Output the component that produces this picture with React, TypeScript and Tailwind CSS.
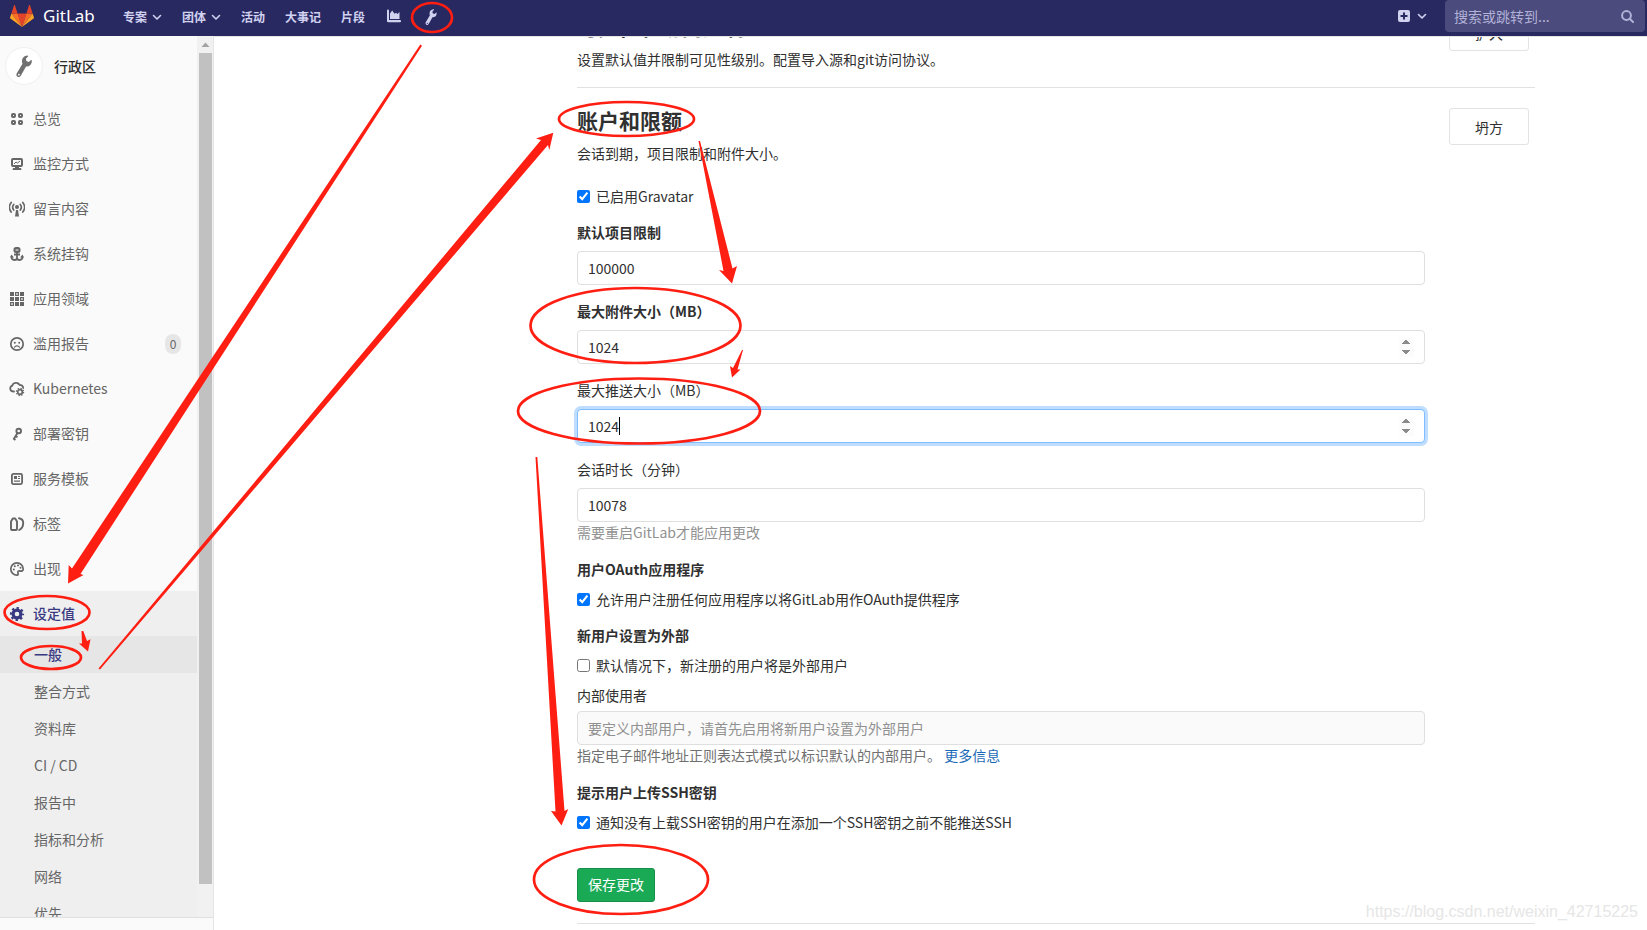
import React from "react";

type IconProps = { className?: string };

const Wrench = ({ className }: IconProps) => (
  <svg viewBox="0 0 16 22" className={className} fill="currentColor" fillRule="evenodd" aria-hidden="true">
    <path d="M11.500.500C8 .800 5.800 3.200 6 6.500c0 .9.2 1.500.5 2.200L.8 18.200c-.8 1.500-.4 2.900.8 3.600 1.200.6 2.500.2 3.200-1.100L10 11.500c3.500.2 6-2.300 5.800-6 0-.6-.3-.8-.8-.4L12.800 7l-2.500-1.100L10 3.400l2-1.900c.5-.5.2-1-.5-1zM2.900 18.800a.9.9 0 1 1 0 1.800.9.9 0 0 1 0-1.800z" />
  </svg>
);

const Chevron = () => (
  <svg viewBox="0 0 10 10" className="h-2.5 w-2.5" fill="none" stroke="currentColor" strokeWidth="1.600" strokeLinecap="round" strokeLinejoin="round" aria-hidden="true">
    <path d="M1.500 3.500 5 7l3.500-3.500" />
  </svg>
);

const Tanuki = () => (
  <svg viewBox="0 0 24 22" className="h-[22px] w-6" aria-hidden="true">
    <path d="M12 22 16.420 8.400H7.580z" fill="#e24329" />
    <path d="M12 22 7.580 8.400H1.390z" fill="#fc6d26" />
    <path d="M1.390 8.400.05 12.530a.91.91 0 0 0 .330 1.020L12 22z" fill="#fca326" />
    <path d="M1.390 8.400h6.190L4.920.220a.46.46 0 0 0-.87 0z" fill="#e24329" />
    <path d="M12 22 16.420 8.400h6.190z" fill="#fc6d26" />
    <path d="m22.610 8.400 1.340 4.130a.91.91 0 0 1-.330 1.020L12 22z" fill="#fca326" />
    <path d="M22.610 8.400h-6.190L19.080.220a.46.46 0 0 1 .87 0z" fill="#e24329" />
  </svg>
);

const glyphs: Record<string, React.ReactNode> = {
  overview: (
    <g fill="none" stroke="currentColor" strokeWidth="2">
      <rect x="3" y="3" width="3" height="3" rx="1" />
      <rect x="10" y="3" width="3" height="3" rx="1" />
      <rect x="3" y="10" width="3" height="3" rx="1" />
      <rect x="10" y="10" width="3" height="3" rx="1" />
    </g>
  ),
  monitor: (
    <>
      <rect x="3" y="3" width="10" height="7" rx="1" fill="none" stroke="currentColor" strokeWidth="2" />
      <path d="m5 8 2-2 1.500 1L11 5" fill="none" stroke="currentColor" />
      <path d="M6 11h4v1h1.500a.8.8 0 0 1 .8.8v1.200H3.700v-1.200a.8.8 0 0 1 .8-.8H6z" />
    </>
  ),
  messages: (
    <>
      <circle cx="8" cy="6" r="2" />
      <path d="M7 9h2l1 6.500H6z" />
      <g fill="none" stroke="currentColor" strokeWidth="1.700" strokeLinecap="round">
        <path d="M4.700 3.500a4.500 4.500 0 0 0 0 5.500M11.300 3.500a4.500 4.500 0 0 1 0 5.500M2.200 1.500a7.500 7.500 0 0 0 0 9.500M13.800 1.500a7.500 7.500 0 0 1 0 9.500" />
      </g>
    </>
  ),
  hook: (
    <>
      <rect x="5.500" y="2" width="5" height="4" rx="1.500" fill="none" stroke="currentColor" strokeWidth="2" />
      <path d="M5 4h6" stroke="currentColor" />
      <path d="M8 6v7M2.500 10.500c0 2 1.200 3.500 2.800 3.500C7 14 8 13 8 12c0 1 1 2 2.700 2 1.600 0 2.800-1.500 2.800-3.500M5 8.500h6" fill="none" stroke="currentColor" strokeWidth="1.800" />
      <path d="m1 11.500 1.500-3L5 11.500zm10 0 2.500-3 1.500 3z" />
    </>
  ),
  apps: (
    <>
      <path d="M1 1h4v4H1zM11 1h4v4h-4zM1 6h4v4H1zM6 6h4v4H6zM6 11h4v4H6zM11 11h4v4h-4z" />
      <path d="M6.600 1.600h2.800v2.800H6.600zM11.600 6.600h2.800v2.800h-2.800zM1.600 11.600h2.800v2.800H1.600z" fill="none" stroke="currentColor" strokeWidth="1.200" />
    </>
  ),
  abuse: (
    <>
      <circle cx="8" cy="8" r="6.200" fill="none" stroke="currentColor" strokeWidth="1.700" />
      <circle cx="5.800" cy="6.800" r="1" />
      <circle cx="10.200" cy="6.800" r="1" />
      <path d="M5.500 11.200c1-1.700 4-1.700 5 0" fill="none" stroke="currentColor" strokeWidth="1.200" strokeLinecap="round" />
    </>
  ),
  kubernetes: (
    <>
      <path d="M5 10.500H4a3 3 0 0 1-.8-5.800C3.800 2.500 6 1.500 8 2c1.200.2 2 1 2.500 1.800 2.200 0 3.500 1 3.700 3.200" fill="none" stroke="currentColor" strokeWidth="1.800" strokeLinecap="round" />
      <circle cx="11" cy="11" r="2.300" fill="none" stroke="currentColor" strokeWidth="1.700" />
      <circle cx="11" cy="11" r="3.600" fill="none" stroke="currentColor" strokeWidth="1.200" strokeDasharray="1.400 1.427" />
    </>
  ),
  key: (
    <>
      <circle cx="9.700" cy="5" r="2.300" fill="none" stroke="currentColor" strokeWidth="1.900" />
      <path d="m8.500 7-4 6.500M6.500 10l2 1.300M4.500 12.800l2 1.200" fill="none" stroke="currentColor" strokeWidth="1.900" />
    </>
  ),
  template: (
    <>
      <rect x="2.900" y="2.900" width="10.200" height="10.200" rx="1.500" fill="none" stroke="currentColor" strokeWidth="1.800" />
      <path d="M5 5h3v3H5zM9 5h2v1H9zM9 7h2v1H9zM5 9.500h6v1.300H5z" />
    </>
  ),
  labels: (
    <g fill="none" stroke="currentColor" strokeWidth="1.900" strokeLinejoin="round">
      <path d="M2 5.500 3.800 2.500h2.400L8 5.500V13a1 1 0 0 1-1 1H3a1 1 0 0 1-1-1z" />
      <path d="M10 2.300c2.500.4 4.200 2.200 4.200 4.700 0 2.800-1.200 5.500-4 7" strokeLinecap="round" />
    </g>
  ),
  palette: (
    <>
      <path d="M8 1.800A6.200 6.200 0 1 0 8 14.200c1.500 0 1.200-1.500.9-2.600-.3-1.300.7-2 1.900-1.700 1.700.5 3.400.1 3.400-2A6.200 6.200 0 0 0 8 1.800z" fill="none" stroke="currentColor" strokeWidth="1.700" />
      <circle cx="4.800" cy="8.500" r="1" />
      <circle cx="5.800" cy="5.300" r="1" />
      <circle cx="9" cy="4.500" r="1" />
      <circle cx="11.500" cy="6.800" r="1" />
    </>
  ),
  settings: (
    <>
      <circle cx="8" cy="8" r="3.900" fill="none" stroke="currentColor" strokeWidth="3.200" />
      <circle cx="8" cy="8" r="6.100" fill="none" stroke="currentColor" strokeWidth="2" strokeDasharray="2.400 2.391" strokeDashoffset="1.200" />
    </>
  ),
};

const Glyph = ({ name }: { name: string }) => (
  <svg viewBox="0 0 16 16" className="h-4 w-4 shrink-0" fill="currentColor" aria-hidden="true">
    {glyphs[name]}
  </svg>
);

const menu = [
  { icon: "overview", label: "总览" },
  { icon: "monitor", label: "监控方式" },
  { icon: "messages", label: "留言内容" },
  { icon: "hook", label: "系统挂钩" },
  { icon: "apps", label: "应用领域" },
  { icon: "abuse", label: "滥用报告", count: 0 },
  { icon: "kubernetes", label: "Kubernetes" },
  { icon: "key", label: "部署密钥" },
  { icon: "template", label: "服务模板" },
  { icon: "labels", label: "标签" },
  { icon: "palette", label: "出现" },
];

const submenu = ["整合方式", "资料库", "CI / CD", "报告中", "指标和分析", "网络", "优先"];

function Navbar() {
  return (
    <header className="flex h-9 shrink-0 items-start bg-[#292961] pl-2.5 text-[#d1d1f0]">
      <a href="#" className="flex h-8 items-center gap-[9px]">
        <Tanuki />
        <span className="w-[52px] font-['Noto_Sans','Noto_Sans_CJK_SC',sans-serif] text-[17px] leading-8 text-white">GitLab</span>
      </a>
      <nav className="ml-7 flex h-[33px] items-center gap-5 text-xs font-bold">
        <button type="button" className="flex items-center gap-[5px]">专案<Chevron /></button>
        <button type="button" className="flex items-center gap-[5px]">团体<Chevron /></button>
        <a href="#">活动</a>
        <a href="#">大事记</a>
        <a href="#">片段</a>
        <a href="#" aria-label="统计" className="ml-0.5 pb-0.5">
          <svg viewBox="0 0 14 14" className="h-3.5 w-3.5" fill="currentColor" aria-hidden="true">
            <path d="M0 1.500a1 1 0 0 1 2 0V11h11a1 1 0 0 1 0 2.300H1.200A1.200 1.200 0 0 1 0 12zM3 4.500l2.200-3 2.300 3.200 1.500-1 1.500 1.300L12.500 3v7H3z" />
          </svg>
        </a>
        <a href="#" aria-label="管理" className="ml-1"><Wrench className="h-4 w-3" /></a>
      </nav>
      <div className="ml-auto flex items-center">
        <button type="button" aria-label="新建" className="flex items-center gap-[7px] pr-[18px]">
          <svg viewBox="0 0 12 12" className="h-3 w-3" aria-hidden="true">
            <rect width="12" height="12" rx="2" fill="currentColor" />
            <path d="M6 2.500v7M2.500 6h7" stroke="#292961" strokeWidth="2" />
          </svg>
          <Chevron />
        </button>
        <div className="mr-0.5 flex h-8 w-[200px] items-center rounded bg-[#4b4b7d] pr-[11px] pl-[9px]">
          <input aria-label="搜索" placeholder="搜索或跳转到..." className="min-w-0 flex-1 bg-transparent text-sm text-white outline-none placeholder:text-[#b2b2d8]" />
          <svg viewBox="0 0 13 13" className="h-[13px] w-[13px] text-[#b2b2d8]" fill="none" stroke="currentColor" strokeWidth="2" strokeLinecap="round" aria-hidden="true">
            <circle cx="5.500" cy="5.500" r="4.400" />
            <path d="m9 9 3 3" />
          </svg>
        </div>
      </div>
    </header>
  );
}

function Sidebar() {
  return (
    <aside className="flex w-[214px] shrink-0 flex-col border-r border-[#e5e5e5] bg-[#fafafa]">
      <div className="flex min-h-0 flex-1">
        <div className="flex min-w-0 flex-1 flex-col overflow-hidden">
          <div className="flex h-[60px] shrink-0 items-center gap-[11px] pl-[5px] text-sm font-medium text-[#2e2e2e]">
            <span className="flex h-[38px] w-[38px] items-center justify-center rounded-full border border-[#f0f0f0] bg-white text-[#707070]">
              <Wrench className="h-[22px] w-4" />
            </span>
            行政区
          </div>
          <nav className="flex flex-1 flex-col text-sm text-[#666]">
            {menu.map((m) => (
              <a key={m.label} href="#" className="flex h-[45px] shrink-0 items-center gap-2 pr-4 pl-[9px]">
                <Glyph name={m.icon} />
                <span className="pb-0.5">{m.label}</span>
                {m.count !== undefined && (
                  <span className="ml-auto h-5 w-4 rounded-full bg-[#e6e6e6] text-center text-xs leading-5">{m.count}</span>
                )}
              </a>
            ))}
            <div className="flex flex-1 flex-col bg-[#efefef]">
              <a href="#" className="flex h-[45px] shrink-0 items-center gap-2 pl-[9px] font-medium text-[#393982]">
                <Glyph name="settings" />
                <span className="pb-0.5">设定值</span>
              </a>
              <a href="#" className="flex h-[37px] shrink-0 items-center bg-[#e6e6e6] pb-0.5 pl-[34px] font-medium text-[#393982]">一般</a>
              {submenu.map((s) => (
                <a key={s} href="#" className="flex h-[37px] shrink-0 items-center pb-0.5 pl-[34px]">{s}</a>
              ))}
            </div>
          </nav>
        </div>
        <div className="flex w-4 flex-col items-center bg-[#f1f1f1]">
          <svg viewBox="0 0 16 17" className="h-[17px] w-4 shrink-0" aria-hidden="true">
            <path d="M8.500 6.500 12.500 11h-8z" fill="#a3a3a3" />
          </svg>
          <div className="mb-[33px] w-[13px] flex-1 bg-[#c1c1c1]" />
        </div>
      </div>
      <div className="h-[13px] shrink-0 border-t border-[#e0e0e0]" />
    </aside>
  );
}

const fieldClass =
  "block h-[34px] w-full rounded border border-[#dfdfdf] bg-white px-2.5 text-sm text-[#303030] outline-none [&::-webkit-inner-spin-button]:opacity-100";

function SectionHead({ title, text, action }: { title: string; text: string; action: string }) {
  return (
    <div className="flex items-start justify-between pr-1.5">
      <div>
        <h4 className="text-[21px] leading-[25px] font-bold">{title}</h4>
        <p className="mt-2.5">{text}</p>
      </div>
      <button type="button" className="h-[37px] w-20 rounded-[3px] border border-[#e3e3e3] bg-white">{action}</button>
    </div>
  );
}

function Check({ label, on, className }: { label: string; on?: boolean; className: string }) {
  return (
    <label className={`flex items-center gap-1.5 ${className}`}>
      <input type="checkbox" defaultChecked={on} className="h-[13px] w-[13px]" />
      {label}
    </label>
  );
}

function Main() {
  return (
    <main className="min-w-0 flex-1 overflow-hidden border-t border-[#e5e5e5] pr-28 pl-[363px] text-sm leading-5 text-[#303030]">
      <section className="-mt-[23px] border-b border-[#e1e1e1] pb-[18px]">
        <SectionHead title="可见性和访问控制" text="设置默认值并限制可见性级别。配置导入源和git访问协议。" action="扩大" />
      </section>
      <section className="border-b border-[#e1e1e1] pt-5 pb-[21px]">
        <SectionHead title="账户和限额" text="会话到期，项目限制和附件大小。" action="坍方" />
        <form className="mt-[23px] max-w-[848px]" onSubmit={(e) => e.preventDefault()}>
          <Check label="已启用Gravatar" on className="" />

          <label htmlFor="projects" className="mt-4 mb-[9px] block font-bold">默认项目限制</label>
          <input id="projects" type="text" defaultValue="100000" className={fieldClass} />

          <label htmlFor="attachment" className="mt-4 mb-[9px] block font-bold">最大附件大小（MB）</label>
          <input id="attachment" type="number" defaultValue={1024} className={fieldClass} />

          <label htmlFor="push" className="mt-4 mb-[9px] block">最大推送大小（MB）</label>
          <div className="relative">
            <input
              id="push"
              type="number"
              defaultValue={1024}
              className="block h-[34px] w-full rounded border border-[#80bdff] bg-white px-2.5 text-sm text-[#303030] shadow-[0_0_0_3px_#bfdeff] outline-none [&::-webkit-inner-spin-button]:opacity-100"
            />
            <span className="absolute top-2 left-[42px] h-[18px] w-px bg-black" />
          </div>

          <label htmlFor="session" className="mt-4 mb-[9px] block">会话时长（分钟）</label>
          <input id="session" type="text" defaultValue="10078" className={fieldClass} />
          <p className="text-[#919191]">需要重启GitLab才能应用更改</p>

          <p className="mt-[17px] font-bold">用户OAuth应用程序</p>
          <Check label="允许用户注册任何应用程序以将GitLab用作OAuth提供程序" on className="mt-2.5" />

          <p className="mt-4 font-bold">新用户设置为外部</p>
          <Check label="默认情况下，新注册的用户将是外部用户" className="mt-2.5" />

          <label htmlFor="internal" className="mt-2.5 mb-1.5 block">内部使用者</label>
          <input
            id="internal"
            type="text"
            readOnly
            placeholder="要定义内部用户，请首先启用将新用户设置为外部用户"
            className="block h-[34px] w-full rounded border border-[#dfdfdf] bg-[#fafafa] px-2.5 text-sm outline-none placeholder:text-[#919191]"
          />
          <p className="text-[#707070]">
            指定电子邮件地址正则表达式模式以标识默认的内部用户。 <a href="#" className="text-[#1b69b6]">更多信息</a>
          </p>

          <p className="mt-[17px] font-bold">提示用户上传SSH密钥</p>
          <Check label="通知没有上载SSH密钥的用户在添加一个SSH密钥之前不能推送SSH" on className="mt-2.5" />

          <button type="submit" className="mt-9 block h-[34px] w-[78px] rounded-[3px] border border-[#168f48] bg-[#1aaa55] pb-0.5 text-white">保存更改</button>
        </form>
      </section>
    </main>
  );
}

function Annotations() {
  return (
    <svg className="pointer-events-none absolute inset-0 h-full w-full" aria-hidden="true">
      <g fill="none" stroke="#ff1e12" strokeWidth="2.700">
        <ellipse cx="432" cy="17.500" rx="20" ry="14.500" />
        <ellipse cx="626.500" cy="119" rx="67.500" ry="17" />
        <ellipse cx="635.500" cy="325.500" rx="105" ry="37.500" />
        <ellipse cx="639" cy="411" rx="121" ry="32.500" />
        <ellipse cx="47" cy="612.500" rx="42.500" ry="16.500" />
        <ellipse cx="51" cy="657.500" rx="30" ry="11.500" />
        <ellipse cx="621" cy="879.500" rx="87" ry="34.500" />
      </g>
      <g fill="#ff1e12">
        <path d="M420.300 44.500 422 45.700 80.500 574 83.500 575 68 583.500 68.700 565 72 568.500z" />
        <path d="M98.500 668.500 100 669.500 548 145 549.300 150 553.300 132.700 536 138.500 541 140z" />
        <path d="M698.500 141H700L732.500 268.500 737 266 732 283.500 719 270 723.500 271z" />
        <path d="M742 350h1L737.500 369.500 740.500 369.500 732 377.500 730 366 733 368z" />
        <path d="M535.500 457H537.300L564.500 811 568.300 809 561.500 825.500 551 811 555.500 811.500z" />
        <path d="M81.500 631H83.300L87 641 90.500 639.300 88 651.500 79 643.500 82 643.500z" />
      </g>
    </svg>
  );
}

export default function App() {
  return (
    <div className="relative flex h-screen flex-col overflow-hidden bg-white font-['Noto_Sans_CJK_SC',sans-serif]">
      <Navbar />
      <div className="flex min-h-0 flex-1">
        <Sidebar />
        <Main />
      </div>
      <span className="pointer-events-none absolute right-[9px] bottom-2 font-['Liberation_Sans',sans-serif] text-base leading-5 text-[#e6e6e6]">
        https://blog.csdn.net/weixin_42715225
      </span>
      <Annotations />
    </div>
  );
}
